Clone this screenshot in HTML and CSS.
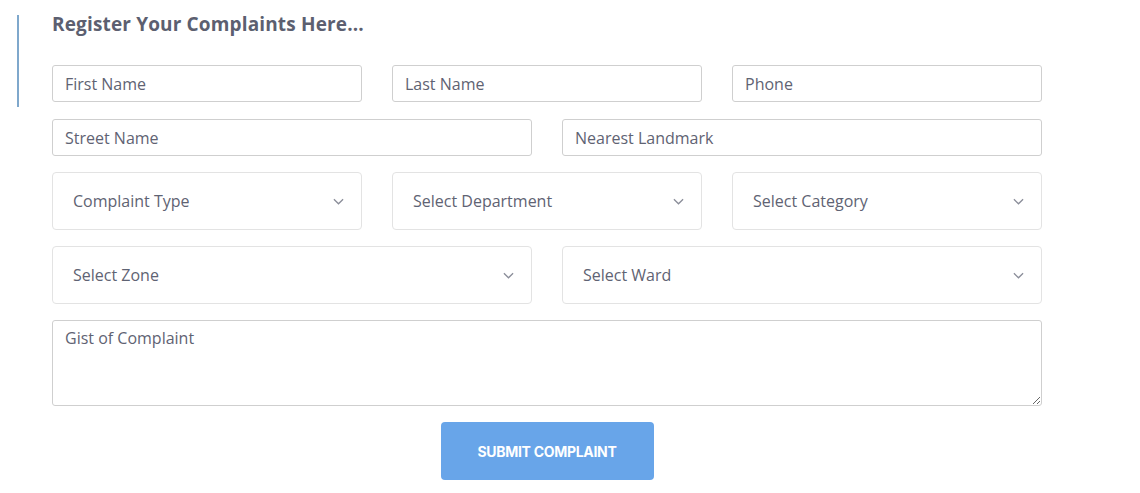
FILE: index.html
```html
<!DOCTYPE html>
<html>
<head>
    <title>Register Complaint</title>
    <link rel="stylesheet" href="styles.css">
</head>
<body>
    <form class="complaint">
        <div class="complaint__intro">
            <h2>Register Your Complaints Here...</h2>
            <div class="row row--three">
                <input type="text" placeholder="First Name">
                <input type="text" placeholder="Last Name">
                <input type="text" placeholder="Phone">
            </div>
        </div>
        <div class="complaint__body">
            <div class="row row--two">
                <input type="text" placeholder="Street Name">
                <input type="text" placeholder="Nearest Landmark">
            </div>
            <div class="row row--three">
                <div class="select">
                    <select><option>Complaint Type</option></select>
                    <svg viewBox="0 0 12 7"><path d="M1 1l5 5 5-5"/></svg>
                </div>
                <div class="select">
                    <select><option>Select Department</option></select>
                    <svg viewBox="0 0 12 7"><path d="M1 1l5 5 5-5"/></svg>
                </div>
                <div class="select">
                    <select><option>Select Category</option></select>
                    <svg viewBox="0 0 12 7"><path d="M1 1l5 5 5-5"/></svg>
                </div>
            </div>
            <div class="row row--two">
                <div class="select">
                    <select><option>Select Zone</option></select>
                    <svg viewBox="0 0 12 7"><path d="M1 1l5 5 5-5"/></svg>
                </div>
                <div class="select">
                    <select><option>Select Ward</option></select>
                    <svg viewBox="0 0 12 7"><path d="M1 1l5 5 5-5"/></svg>
                </div>
            </div>
            <textarea placeholder="Gist of Complaint"></textarea>
            <button type="button" class="submit">Submit Complaint</button>
        </div>
    </form>
</body>
</html>
```

FILE: styles.css
```css
*, ::after, ::before {
    box-sizing: border-box;
}

body {
    margin: 0;
    background: #fff;
    font-family: "Open Sans", Arial, sans-serif;
    color: #5d6170;
}

.complaint {
    width: 1025px;
    margin: 15px 0 0 17px;
}

.complaint__intro {
    border-left: 2px solid #7fa8cc;
    padding: 0 0 5px 33px;
}

.complaint__intro h2 {
    margin: 0 0 32px;
    font-family: "Open Sans", sans-serif;
    font-size: 19px;
    font-weight: 700;
    line-height: 18px;
    color: #5c5f70;
    letter-spacing: 0.15px;
}

.complaint__body {
    display: flex;
    flex-direction: column;
    gap: 16px;
    padding: 12px 0 0 35px;
}

.row {
    display: grid;
    gap: 30px;
}

.row--three {
    grid-template-columns: repeat(3, 1fr);
}

.row--two {
    grid-template-columns: repeat(2, 1fr);
}

input[type="text"], textarea {
    width: 100%;
    height: 37px;
    padding: 0 12px;
    border: 1px solid #cfcfcf;
    border-radius: 3px;
    font-family: inherit;
    font-size: 16px;
    color: #5d6170;
    background: #fff;
}

::placeholder {
    color: #5f6373;
    opacity: 1;
}

textarea {
    height: 86px;
    padding: 6px 12px;
    resize: vertical;
}

.select {
    position: relative;
}

.select select {
    width: 100%;
    height: 58px;
    padding: 0 20px;
    border: 1px solid #e3e3e3;
    border-radius: 4px;
    appearance: none;
    background: #fff;
    font-family: inherit;
    font-size: 16px;
    color: #5f6373;
}

.select svg {
    position: absolute;
    right: 18px;
    top: 26px;
    width: 11px;
    height: 7px;
    fill: none;
    stroke: #8a8d99;
    stroke-width: 1.4;
    pointer-events: none;
}

.submit {
    align-self: center;
    width: 213px;
    height: 58px;
    border: none;
    border-radius: 4px;
    background: #68a5e9;
    color: #fff;
    font-family: Inter, Arial, sans-serif;
    font-size: 14px;
    font-weight: 700;
    text-transform: uppercase;
    letter-spacing: -0.3px;
    cursor: pointer;
}
```
